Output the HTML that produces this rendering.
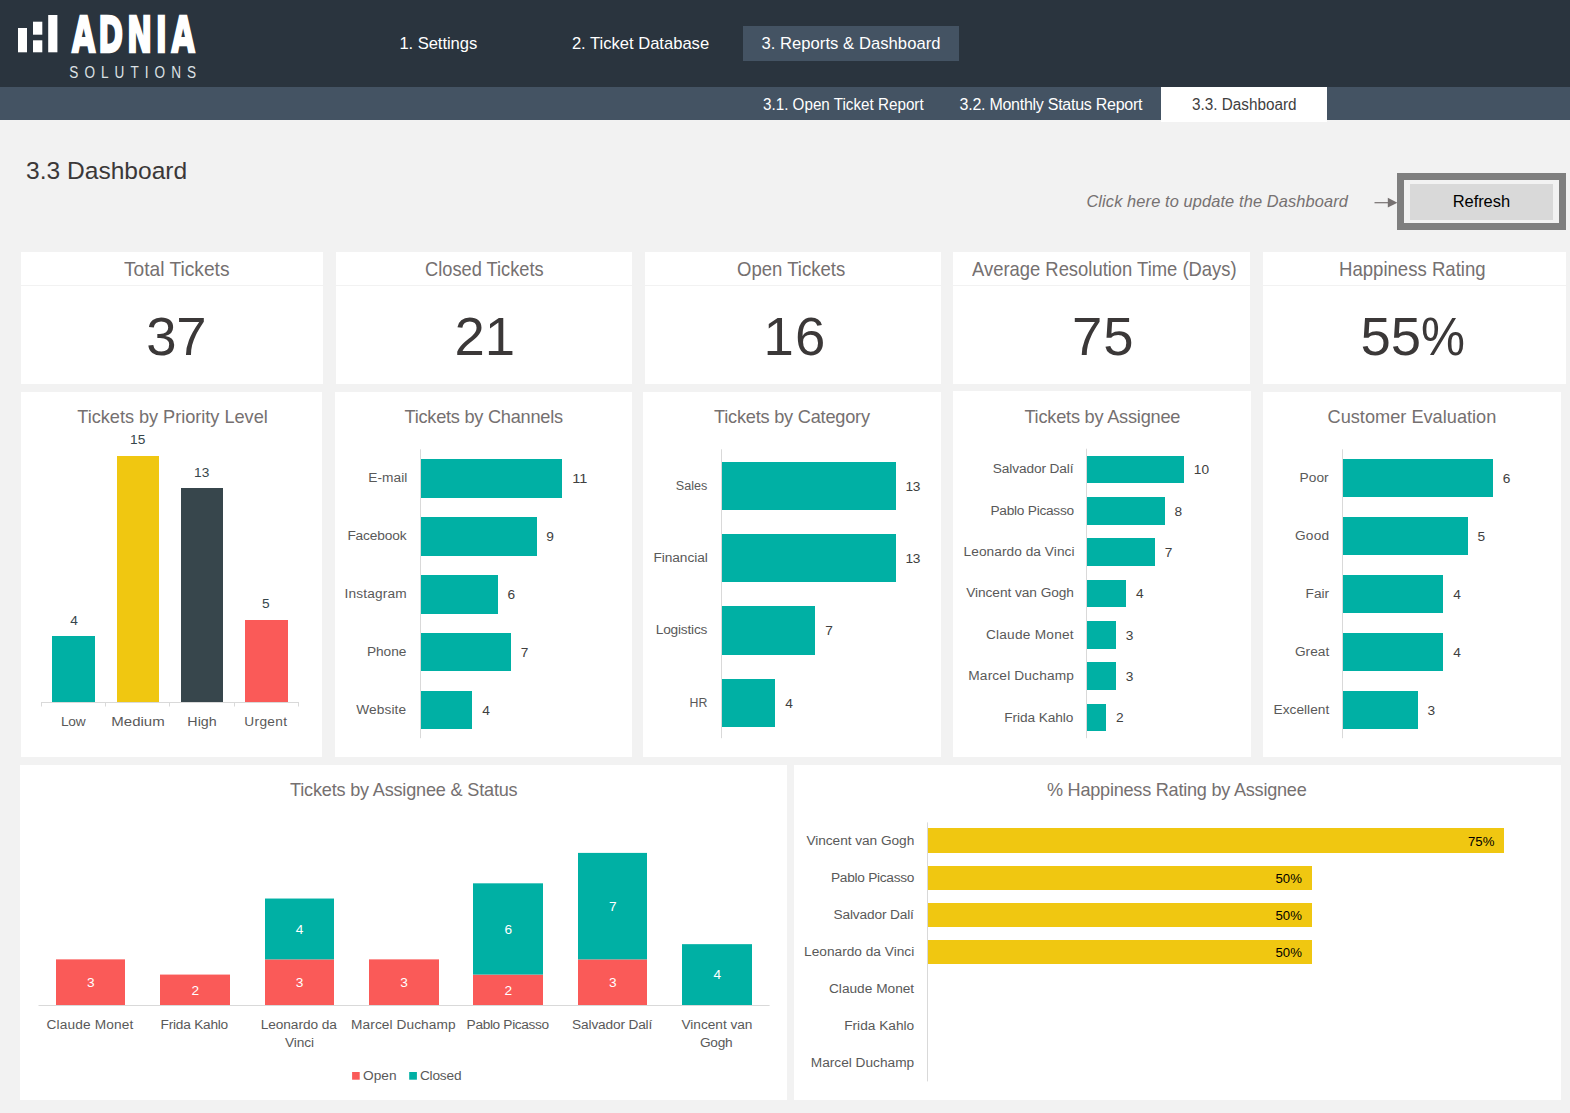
<!DOCTYPE html>
<html lang="en">
<head>
<meta charset="utf-8">
<title>3.3 Dashboard - Help Desk Ticket Tracker</title>
<style>
html,body{margin:0;padding:0}
body{width:1570px;height:1113px;position:relative;overflow:hidden;background:#F2F2F2;font-family:'Liberation Sans', sans-serif;}
.t{position:absolute;white-space:nowrap;display:block;margin:0;padding:0;font-weight:normal;font-style:normal;text-decoration:none}
header{position:absolute;left:0;top:0;width:1570px;height:87px;background:#2A343E}
#logo{position:absolute;left:0;top:0}
.tab-active{position:absolute;left:743px;top:26px;width:216px;height:35px;background:#445363}
nav.sub{position:absolute;left:0;top:87px;width:1570px;height:33px;background:#445363}
.subtab-active{position:absolute;left:1161px;top:87px;width:166px;height:34.5px;background:#fff}
.card,.kpi{position:absolute;background:#fff;overflow:hidden}
.card svg{display:block}
.card text{font-family:'Liberation Sans', sans-serif;}
.kpi .sep{position:absolute;left:0;top:33px;width:100%;height:1px;background:#F2F2F2}
.frame{position:absolute;left:1397px;top:173px;width:155px;height:42.5px;border:7px solid #7F7F7F;background:#F2F2F2}
.btn{position:absolute;left:1410px;top:184px;width:143px;height:36px;background:#D9D9D9}
#arrow{position:absolute;left:1370px;top:195px}
</style>
</head>
<body>
<header>
<svg id="logo" width="200" height="87" viewBox="0 0 200 87">
<rect x="18" y="28" width="9" height="24.3" fill="#fff"/>
<rect x="33" y="21.7" width="9.3" height="13" fill="#fff"/>
<rect x="33" y="40.3" width="9.3" height="12" fill="#fff"/>
<rect x="48.2" y="15" width="9.2" height="37.3" fill="#fff"/>
<text x="1.48 44.59 91.64 138.85 164.92" y="0" transform="translate(71,51.7) scale(0.61,1)" style="font-family:'DejaVu Sans','Liberation Sans',sans-serif;font-weight:bold;font-size:49.2px;fill:#fff;stroke:#fff;stroke-width:2.4px;">ADNIA</text>
<text x="0" y="0" transform="translate(69.3,78) scale(0.8,1)" textLength="158.5" lengthAdjust="spacing" style="font-family:'Liberation Sans', sans-serif;font-size:17px;fill:#DDE1E5;">SOLUTIONS</text>
</svg>
<div class="tab-active"></div>
<nav class="main" aria-label="Sections"><a class="t" style="left:399.4px;top:33.59px;font-size:16.6px;line-height:19.92px;color:#fff;letter-spacing:-0.06px;">1. Settings</a><a class="t" style="left:571.9px;top:33.59px;font-size:16.6px;line-height:19.92px;color:#fff;letter-spacing:-0.012px;">2. Ticket Database</a><a class="t" style="left:761.4px;top:33.59px;font-size:16.6px;line-height:19.92px;color:#fff;letter-spacing:0.052px;">3. Reports &amp; Dashboard</a></nav>
</header>
<nav class="sub" aria-label="Reports"></nav>
<div class="subtab-active"></div>
<a class="t" style="left:762.75px;top:95.06px;font-size:16px;line-height:19.2px;color:#fff;transform:scaleX(0.9506);transform-origin:0 0;">3.1. Open Ticket Report</a><a class="t" style="left:959.6px;top:95.06px;font-size:16px;line-height:19.2px;color:#fff;letter-spacing:-0.264px;">3.2. Monthly Status Report</a><a class="t" style="left:1192.04px;top:95.06px;font-size:16px;line-height:19.2px;color:#404040;transform:scaleX(0.9551);transform-origin:0 0;">3.3. Dashboard</a>
<h1 class="t" style="left:25.77px;top:156.88px;font-size:23.9px;line-height:28.68px;color:#3B3838;transform:scaleX(1.0286);transform-origin:0 0;">3.3 Dashboard</h1>
<em class="t" style="left:1086.4px;top:191.68px;font-size:16.4px;line-height:19.68px;color:#767171;letter-spacing:0.109px;font-style:italic;">Click here to update the Dashboard</em>
<svg id="arrow" width="30" height="16" viewBox="1370 195 30 16"><line x1="1374.5" y1="202.7" x2="1389" y2="202.7" stroke="#767171" stroke-width="1.2"/><path d="M1387.8 197.8 L1397.4 202.7 L1387.8 207.6 Z" fill="#767171"/></svg>
<div class="frame"></div>
<div class="btn"></div>
<strong class="t" style="left:1452.7px;top:191.58px;font-size:16.5px;line-height:19.8px;color:#000;letter-spacing:-0.067px;">Refresh</strong>
<section class="kpi" style="left:21px;top:252px;width:302px;height:132px"><div class="sep"></div><h2 class="t" style="left:103.0px;top:5.18px;font-size:20.2px;line-height:24.24px;color:#757070;transform:scaleX(0.95);transform-origin:0 0;">Total Tickets</h2><span class="t" style="left:125.3px;top:52.02px;font-size:54.5px;line-height:65.4px;color:#3B3838;letter-spacing:-0.3px;">37</span></section>
<section class="kpi" style="left:336px;top:252px;width:296px;height:132px"><div class="sep"></div><h2 class="t" style="left:89.1px;top:5.18px;font-size:20.2px;line-height:24.24px;color:#757070;transform:scaleX(0.9038);transform-origin:0 0;">Closed Tickets</h2><span class="t" style="left:118.5px;top:52.02px;font-size:54.5px;line-height:65.4px;color:#3B3838;">21</span></section>
<section class="kpi" style="left:645px;top:252px;width:296px;height:132px"><div class="sep"></div><h2 class="t" style="left:92.08px;top:5.18px;font-size:20.2px;line-height:24.24px;color:#757070;transform:scaleX(0.9181);transform-origin:0 0;">Open Tickets</h2><span class="t" style="left:118.5px;top:52.02px;font-size:54.5px;line-height:65.4px;color:#3B3838;letter-spacing:1.2px;">16</span></section>
<section class="kpi" style="left:953px;top:252px;width:297px;height:132px"><div class="sep"></div><h2 class="t" style="left:18.5px;top:5.18px;font-size:20.2px;line-height:24.24px;color:#757070;transform:scaleX(0.9118);transform-origin:0 0;">Average Resolution Time (Days)</h2><span class="t" style="left:119px;top:52.02px;font-size:54.5px;line-height:65.4px;color:#3B3838;letter-spacing:1.0px;">75</span></section>
<section class="kpi" style="left:1263px;top:252px;width:303px;height:132px"><div class="sep"></div><h2 class="t" style="left:75.66px;top:5.18px;font-size:20.2px;line-height:24.24px;color:#757070;transform:scaleX(0.9199);transform-origin:0 0;">Happiness Rating</h2><span class="t" style="left:97.5px;top:52.02px;font-size:54.5px;line-height:65.4px;color:#3B3838;">55</span><span class="t" style="left:157.69px;top:52.02px;font-size:54.5px;line-height:65.4px;color:#3B3838;transform:scaleX(0.9068);transform-origin:0 0;">%</span></section>
<section class="card" id="c1" aria-label="Tickets by Priority Level" style="left:21px;top:392px;width:301px;height:365px">
<svg width="301" height="365" viewBox="21 392 301 365">
<rect x="52" y="636" width="43" height="66" fill="#00B0A4"/>
<rect x="117" y="456" width="42" height="246" fill="#F0C711"/>
<rect x="181" y="488" width="42" height="214" fill="#37464C"/>
<rect x="245" y="620" width="43" height="82" fill="#FA5A58"/>
<line x1="41" y1="702.5" x2="299" y2="702.5" stroke="#D9D9D9" stroke-width="1"/>
<line x1="41.5" y1="702" x2="41.5" y2="706.5" stroke="#D9D9D9" stroke-width="1"/>
<line x1="105.5" y1="702" x2="105.5" y2="706.5" stroke="#D9D9D9" stroke-width="1"/>
<line x1="169.5" y1="702" x2="169.5" y2="706.5" stroke="#D9D9D9" stroke-width="1"/>
<line x1="234.5" y1="702" x2="234.5" y2="706.5" stroke="#D9D9D9" stroke-width="1"/>
<line x1="298.5" y1="702" x2="298.5" y2="706.5" stroke="#D9D9D9" stroke-width="1"/>
<text x="77.3" y="422.8" style="font-size:18.2px;fill:#757070;letter-spacing:-0.038px;">Tickets by Priority Level</text>
<text x="130" y="444" style="font-size:13.7px;fill:#37464C;letter-spacing:0.2px;">15</text>
<text x="194.1" y="476.9" style="font-size:13.7px;fill:#37464C;">13</text>
<text x="70.15" y="625" style="font-size:13.7px;fill:#37464C;">4</text>
<text x="261.9" y="608" style="font-size:13.7px;fill:#37464C;">5</text>
<text x="60.9" y="726.1" style="font-size:13.7px;fill:#595959;letter-spacing:-0.2px;">Low</text>
<text transform="translate(111.3,726.1) scale(1.0957,1)" x="0" y="0" style="font-size:13.7px;fill:#595959;">Medium</text>
<text transform="translate(187.36,726.1) scale(1.0423,1)" x="0" y="0" style="font-size:13.7px;fill:#595959;">High</text>
<text x="244.3" y="726.1" style="font-size:13.7px;fill:#595959;letter-spacing:0.32px;">Urgent</text>
</svg>
</section>
<section class="card" id="c2" aria-label="Tickets by Channels" style="left:335px;top:392px;width:297px;height:365px">
<svg width="297" height="365" viewBox="335 392 297 365">
<rect x="421.0" y="459" width="141.0" height="39" fill="#00B0A4"/>
<rect x="421.0" y="517" width="116.0" height="39" fill="#00B0A4"/>
<rect x="421.0" y="575" width="77.0" height="39" fill="#00B0A4"/>
<rect x="421.0" y="633" width="90.0" height="38" fill="#00B0A4"/>
<rect x="421.0" y="691" width="51.0" height="38" fill="#00B0A4"/>
<line x1="420.5" y1="449.3" x2="420.5" y2="738.2" stroke="#D9D9D9" stroke-width="1"/>
<text x="404.5" y="422.8" style="font-size:18.2px;fill:#757070;letter-spacing:-0.25px;">Tickets by Channels</text>
<text x="368.2" y="481.8" style="font-size:13.7px;fill:#595959;letter-spacing:0.06px;">E-mail</text>
<text x="347.4" y="539.7" style="font-size:13.7px;fill:#595959;letter-spacing:-0.129px;">Facebook</text>
<text x="344.5" y="598.2" style="font-size:13.7px;fill:#595959;letter-spacing:0.15px;">Instagram</text>
<text x="367" y="655.9" style="font-size:13.7px;fill:#595959;letter-spacing:-0.075px;">Phone</text>
<text x="356.3" y="713.9" style="font-size:13.7px;fill:#595959;letter-spacing:0.1px;">Website</text>
<text transform="translate(572.24,482.8) scale(1.0615,1)" x="0" y="0" style="font-size:13.7px;fill:#404040;">11</text>
<text x="546.2" y="540.7" style="font-size:13.7px;fill:#404040;">9</text>
<text x="507.6" y="599" style="font-size:13.7px;fill:#404040;">6</text>
<text x="520.75" y="656.9" style="font-size:13.7px;fill:#404040;">7</text>
<text x="482.25" y="714.9" style="font-size:13.7px;fill:#404040;">4</text>
</svg>
</section>
<section class="card" id="c3" aria-label="Tickets by Category" style="left:643px;top:392px;width:298px;height:365px">
<svg width="298" height="365" viewBox="643 392 298 365">
<rect x="722.0" y="462" width="174.0" height="48" fill="#00B0A4"/>
<rect x="722.0" y="534" width="174.0" height="48" fill="#00B0A4"/>
<rect x="722.0" y="606" width="93.0" height="49" fill="#00B0A4"/>
<rect x="722.0" y="679" width="53.0" height="48" fill="#00B0A4"/>
<line x1="721.5" y1="449.3" x2="721.5" y2="738.2" stroke="#D9D9D9" stroke-width="1"/>
<text x="714" y="422.8" style="font-size:18.2px;fill:#757070;letter-spacing:-0.222px;">Tickets by Category</text>
<text transform="translate(675.78,489.7) scale(0.9212,1)" x="0" y="0" style="font-size:13.7px;fill:#595959;">Sales</text>
<text x="653.4" y="561.8" style="font-size:13.7px;fill:#595959;letter-spacing:-0.037px;">Financial</text>
<text x="655.8" y="634.2" style="font-size:13.7px;fill:#595959;letter-spacing:-0.212px;">Logistics</text>
<text transform="translate(689.6,706.8) scale(0.9,1)" x="0" y="0" style="font-size:13.7px;fill:#595959;">HR</text>
<text x="905.5" y="490.7" style="font-size:13.7px;fill:#404040;letter-spacing:-0.3px;">13</text>
<text x="905.5" y="562.8" style="font-size:13.7px;fill:#404040;letter-spacing:-0.3px;">13</text>
<text x="825.35" y="635.2" style="font-size:13.7px;fill:#404040;">7</text>
<text x="785.25" y="707.8" style="font-size:13.7px;fill:#404040;">4</text>
</svg>
</section>
<section class="card" id="c4" aria-label="Tickets by Assignee" style="left:953px;top:391px;width:298px;height:366px">
<svg width="298" height="366" viewBox="953 391 298 366">
<rect x="1087.0" y="456" width="97.0" height="27" fill="#00B0A4"/>
<rect x="1087.0" y="497" width="78.0" height="28" fill="#00B0A4"/>
<rect x="1087.0" y="538" width="68.0" height="28" fill="#00B0A4"/>
<rect x="1087.0" y="580" width="39.0" height="27" fill="#00B0A4"/>
<rect x="1087.0" y="621" width="29.0" height="28" fill="#00B0A4"/>
<rect x="1087.0" y="662" width="29.0" height="28" fill="#00B0A4"/>
<rect x="1087.0" y="704" width="19.0" height="27" fill="#00B0A4"/>
<line x1="1086.5" y1="448.7" x2="1086.5" y2="738.2" stroke="#D9D9D9" stroke-width="1"/>
<text x="1024.4" y="422.8" style="font-size:18.2px;fill:#757070;letter-spacing:-0.222px;">Tickets by Assignee</text>
<text x="992.8" y="472.9" style="font-size:13.7px;fill:#595959;letter-spacing:-0.117px;">Salvador Dalí</text>
<text x="990.5" y="514.8" style="font-size:13.7px;fill:#595959;letter-spacing:-0.258px;">Pablo Picasso</text>
<text x="963.6" y="555.9" style="font-size:13.7px;fill:#595959;letter-spacing:0.05px;">Leonardo da Vinci</text>
<text x="966.2" y="597" style="font-size:13.7px;fill:#595959;letter-spacing:-0.053px;">Vincent van Gogh</text>
<text x="985.9" y="638.9" style="font-size:13.7px;fill:#595959;letter-spacing:0.227px;">Claude Monet</text>
<text x="968.3" y="680" style="font-size:13.7px;fill:#595959;letter-spacing:0.162px;">Marcel Duchamp</text>
<text x="1004.3" y="721.8" style="font-size:13.7px;fill:#595959;letter-spacing:-0.09px;">Frida Kahlo</text>
<text x="1193.8" y="473.7" style="font-size:13.7px;fill:#404040;letter-spacing:0.2px;">10</text>
<text x="1174.45" y="515.8" style="font-size:13.7px;fill:#404040;">8</text>
<text x="1164.7" y="556.9" style="font-size:13.7px;fill:#404040;">7</text>
<text x="1136.05" y="597.8" style="font-size:13.7px;fill:#404040;">4</text>
<text x="1125.75" y="639.7" style="font-size:13.7px;fill:#404040;">3</text>
<text x="1125.75" y="680.8" style="font-size:13.7px;fill:#404040;">3</text>
<text x="1116.05" y="721.8" style="font-size:13.7px;fill:#404040;">2</text>
</svg>
</section>
<section class="card" id="c5" aria-label="Customer Evaluation" style="left:1263px;top:392px;width:298px;height:365px">
<svg width="298" height="365" viewBox="1263 392 298 365">
<rect x="1343.0" y="459" width="150.0" height="38" fill="#00B0A4"/>
<rect x="1343.0" y="517" width="125.0" height="38" fill="#00B0A4"/>
<rect x="1343.0" y="575" width="100.0" height="38" fill="#00B0A4"/>
<rect x="1343.0" y="633" width="100.0" height="38" fill="#00B0A4"/>
<rect x="1343.0" y="691" width="75.0" height="38" fill="#00B0A4"/>
<line x1="1342.5" y1="449.3" x2="1342.5" y2="738.2" stroke="#D9D9D9" stroke-width="1"/>
<text x="1327.5" y="422.8" style="font-size:18.2px;fill:#757070;">Customer Evaluation</text>
<text x="1299.5" y="481.8" style="font-size:13.7px;fill:#595959;letter-spacing:0.067px;">Poor</text>
<text x="1294.9" y="539.7" style="font-size:13.7px;fill:#595959;letter-spacing:0.267px;">Good</text>
<text x="1329.2" y="598.2" text-anchor="end" style="font-size:13.7px;fill:#595959;">Fair</text>
<text x="1329.2" y="655.9" text-anchor="end" style="font-size:13.7px;fill:#595959;">Great</text>
<text x="1273.5" y="713.9" style="font-size:13.7px;fill:#595959;letter-spacing:0.025px;">Excellent</text>
<text x="1502.7" y="482.8" style="font-size:13.7px;fill:#404040;">6</text>
<text x="1477.55" y="540.7" style="font-size:13.7px;fill:#404040;">5</text>
<text x="1453.15" y="599" style="font-size:13.7px;fill:#404040;">4</text>
<text x="1453.15" y="656.9" style="font-size:13.7px;fill:#404040;">4</text>
<text x="1427.6" y="714.9" style="font-size:13.7px;fill:#404040;">3</text>
</svg>
</section>
<section class="card" id="c6" aria-label="Tickets by Assignee &amp; Status" style="left:20px;top:765px;width:767px;height:335px">
<svg width="767" height="335" viewBox="20 765 767 335">
<rect x="56" y="959.37" width="69" height="45.63" fill="#FA5A58"/>
<rect x="160" y="974.58" width="70" height="30.42" fill="#FA5A58"/>
<rect x="265" y="959.37" width="69" height="45.63" fill="#FA5A58"/>
<rect x="265" y="898.53" width="69" height="60.84" fill="#00B0A4"/>
<rect x="369" y="959.37" width="70" height="45.63" fill="#FA5A58"/>
<rect x="473" y="974.58" width="70" height="30.42" fill="#FA5A58"/>
<rect x="473" y="883.32" width="70" height="91.26" fill="#00B0A4"/>
<rect x="578" y="959.37" width="69" height="45.63" fill="#FA5A58"/>
<rect x="578" y="852.9" width="69" height="106.47" fill="#00B0A4"/>
<rect x="682" y="944.16" width="70" height="60.84" fill="#00B0A4"/>
<line x1="38.5" y1="1005.5" x2="769.6" y2="1005.5" stroke="#D9D9D9" stroke-width="1"/>
<rect x="352.1" y="1072" width="7.6" height="7.7" fill="#FA5A58"/><rect x="409.2" y="1072" width="7.7" height="7.7" fill="#00B0A4"/>
<text x="290" y="795.8" style="font-size:18.1px;fill:#757070;letter-spacing:-0.185px;">Tickets by Assignee &amp; Status</text>
<text x="90.80000000000001" y="987" text-anchor="middle" style="font-size:13.7px;fill:#fff;">3</text>
<text x="195.20000000000002" y="995" text-anchor="middle" style="font-size:13.7px;fill:#fff;">2</text>
<text x="299.6" y="987" text-anchor="middle" style="font-size:13.7px;fill:#fff;">3</text>
<text x="404.00000000000006" y="987" text-anchor="middle" style="font-size:13.7px;fill:#fff;">3</text>
<text x="508.40000000000003" y="995" text-anchor="middle" style="font-size:13.7px;fill:#fff;">2</text>
<text x="612.8000000000001" y="987" text-anchor="middle" style="font-size:13.7px;fill:#fff;">3</text>
<text x="299.6" y="933.9" text-anchor="middle" style="font-size:13.7px;fill:#fff;">4</text>
<text x="508.40000000000003" y="933.5" text-anchor="middle" style="font-size:13.7px;fill:#fff;">6</text>
<text x="612.8000000000001" y="910.5" text-anchor="middle" style="font-size:13.7px;fill:#fff;">7</text>
<text x="717.2" y="978.7" text-anchor="middle" style="font-size:13.7px;fill:#fff;">4</text>
<text x="46.6" y="1029.1" style="font-size:13.7px;fill:#595959;letter-spacing:0.127px;">Claude Monet</text>
<text x="160.6" y="1029.1" style="font-size:13.7px;fill:#595959;letter-spacing:-0.24px;">Frida Kahlo</text>
<text x="260.7" y="1029.1" style="font-size:13.7px;fill:#595959;letter-spacing:-0.07px;">Leonardo da</text>
<text x="285" y="1046.7" style="font-size:13.7px;fill:#595959;letter-spacing:-0.1px;">Vinci</text>
<text x="351.1" y="1029.1" style="font-size:13.7px;fill:#595959;letter-spacing:0.077px;">Marcel Duchamp</text>
<text x="466.6" y="1029.1" style="font-size:13.7px;fill:#595959;letter-spacing:-0.342px;">Pablo Picasso</text>
<text x="572.1" y="1029.1" style="font-size:13.7px;fill:#595959;letter-spacing:-0.167px;">Salvador Dalí</text>
<text x="681.5" y="1029.1" style="font-size:13.7px;fill:#595959;letter-spacing:-0.03px;">Vincent van</text>
<text x="700" y="1046.7" style="font-size:13.7px;fill:#595959;letter-spacing:-0.3px;">Gogh</text>
<text x="363" y="1079.7" style="font-size:13.7px;fill:#595959;letter-spacing:0.033px;">Open</text>
<text x="419.9" y="1079.7" style="font-size:13.7px;fill:#595959;letter-spacing:-0.2px;">Closed</text>
</svg>
</section>
<section class="card" id="c7" aria-label="% Happiness Rating by Assignee" style="left:794px;top:765px;width:767px;height:335px">
<svg width="767" height="335" viewBox="794 765 767 335">
<rect x="928.0" y="828" width="576.0" height="25" fill="#F0C711"/>
<rect x="928.0" y="866" width="384.0" height="24" fill="#F0C711"/>
<rect x="928.0" y="903" width="384.0" height="24" fill="#F0C711"/>
<rect x="928.0" y="940" width="384.0" height="24" fill="#F0C711"/>
<line x1="927.5" y1="822.4" x2="927.5" y2="1081.4" stroke="#D9D9D9" stroke-width="1"/>
<text x="1046.9" y="795.8" style="font-size:18.1px;fill:#757070;letter-spacing:-0.231px;">% Happiness Rating by Assignee</text>
<text x="806.4" y="845" style="font-size:13.7px;fill:#595959;letter-spacing:-0.047px;">Vincent van Gogh</text>
<text x="831" y="881.8" style="font-size:13.7px;fill:#595959;letter-spacing:-0.275px;">Pablo Picasso</text>
<text x="833.5" y="919" style="font-size:13.7px;fill:#595959;letter-spacing:-0.15px;">Salvador Dalí</text>
<text x="914.2" y="956" text-anchor="end" style="font-size:13.7px;fill:#595959;">Leonardo da Vinci</text>
<text x="914.2" y="993" text-anchor="end" style="font-size:13.7px;fill:#595959;">Claude Monet</text>
<text x="914.2" y="1030" text-anchor="end" style="font-size:13.7px;fill:#595959;">Frida Kahlo</text>
<text x="914.2" y="1067" text-anchor="end" style="font-size:13.7px;fill:#595959;">Marcel Duchamp</text>
<text x="1467.9" y="845.7" style="font-size:13.2px;fill:#000;letter-spacing:0.05px;">75%</text>
<text x="1275.4" y="882.5" style="font-size:13.2px;fill:#000;letter-spacing:0.15px;">50%</text>
<text x="1275.4" y="919.5" style="font-size:13.2px;fill:#000;letter-spacing:0.15px;">50%</text>
<text x="1275.4" y="956.5" style="font-size:13.2px;fill:#000;letter-spacing:0.15px;">50%</text>
</svg>
</section>
</body>
</html>
